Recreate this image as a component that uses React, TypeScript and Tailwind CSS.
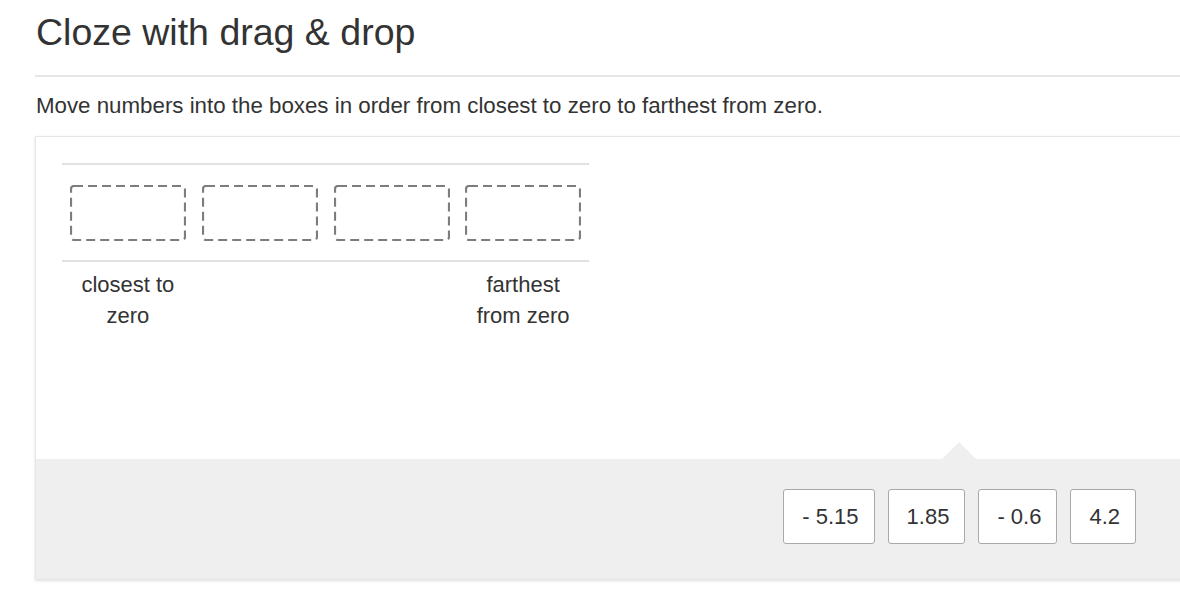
const slots = [0, 1, 2, 3];
const labels = ["closest to zero", "", "", "farthest from zero"];
const choices = ["- 5.15", "1.85", "- 0.6", "4.2"];

const App = () => {
  return (
    <div
      className="w-[1180px] h-[609px] overflow-hidden bg-white text-[#333]"
      style={{ fontFamily: '"Liberation Sans", Arial, sans-serif' }}
    >
      <div className="pl-[35px]">
        <h1 className="pt-[10px] pl-px text-[37.5px] leading-[44px] font-normal">
          Cloze with drag &amp; drop
        </h1>
        <div className="mt-[21px] h-[2px] w-[1160px] bg-[#e6e6e6]"></div>
        <p className="mt-[14px] pl-px text-[22.3px] leading-[30px]">
          Move numbers into the boxes in order from closest to zero to farthest from zero.
        </p>

        <div className="mt-[15px] w-[1165px] border border-[#e6e6e6] shadow-[0_1px_3px_rgba(0,0,0,0.12)]">
          <div className="h-[322px] pl-[26px] pt-[26px]">
            <div className="w-[527px]">
              <div className="h-[2px] bg-[#e2e2e2]"></div>
              <div className="grid grid-cols-4 pt-[20px] pb-[19px]">
                {slots.map((i) => (
                  <div key={i} className="px-[8px]">
                    {/* dashed drop target */}
                    <svg width="116" height="56" className="block">
                      <rect
                        x="1"
                        y="1"
                        width="114"
                        height="54"
                        rx="3"
                        fill="none"
                        stroke="#7d7d7d"
                        strokeWidth="2.2"
                        strokeDasharray="9 5"
                      />
                    </svg>
                  </div>
                ))}
              </div>
              <div className="h-[2px] bg-[#e2e2e2]"></div>
              <div className="grid grid-cols-4 pt-[7px]">
                {labels.map((label, i) => (
                  <div key={i} className="px-[8px] text-center text-[22px] leading-[31px]">
                    {label}
                  </div>
                ))}
              </div>
            </div>
          </div>

          <div className="relative h-[120px] bg-[#efefef] flex items-center justify-end pr-[63px]">
            {/* little pointer above the answer tray */}
            <div className="absolute -top-[17px] left-[906px] h-0 w-0 border-x-[17px] border-b-[17px] border-x-transparent border-b-[#efefef]"></div>
            <div className="flex gap-[13px] -mt-[6px]">
              {choices.map((c) => (
                <div
                  key={c}
                  className="h-[55px] pl-[18px] pr-[15px] flex items-center rounded-[3px] border border-[#a9a9a9] bg-white text-[22px]"
                >
                  {c}
                </div>
              ))}
            </div>
          </div>
        </div>
      </div>
    </div>
  );
};

export default App;
